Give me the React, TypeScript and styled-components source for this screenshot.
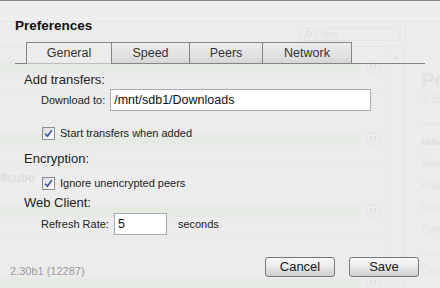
import styled, { createGlobalStyle } from 'styled-components'

const Global = createGlobalStyle`
  html, body {
    margin: 0;
    padding: 0;
    background: #ececec;
  }
  body {
    font-family: "Liberation Sans", Arial, sans-serif;
    color: #222;
  }
`

const Screen = styled.div`
  position: relative;
  width: 440px;
  height: 288px;
  box-sizing: border-box;
  border-top: 1px solid #8a8a8a;
  background: #ececec;
  overflow: hidden;
`

// faded main window behind the dialog
const Backdrop = styled.div`
  display: flex;
  flex-direction: column;
  height: 100%;
  color: #e0e0e0;
`

const TopBar = styled.div`
  height: 20px;
  flex: none;
  background: #eeeeee;
  border-bottom: 1px solid #e6e6e6;
`

const Body = styled.div`
  flex: 1;
  display: flex;
  min-height: 0;
`

const Main = styled.div`
  width: 405px;
  flex: none;
  display: flex;
  flex-direction: column;
`

const FilterBar = styled.div`
  height: 24px;
  flex: none;
  display: flex;
  align-items: center;
  justify-content: flex-end;
  padding-right: 5px;
  border-bottom: 1px solid #e6e6e6;
`

const FilterBox = styled.div`
  width: 96px;
  height: 11px;
  border: 1px solid #e4e4e4;
  border-radius: 2px;
  display: flex;
  align-items: center;
  gap: 3px;
  padding-left: 3px;
  font-size: 11px;
  color: #e3e3e3;
`

const ListArea = styled.div`
  flex: 1;
  display: flex;
  min-height: 0;
`

const Rows = styled.div`
  flex: 1;
  overflow: hidden;
`

const Row = styled.div<{ $offset?: number }>`
  height: 72px;
  box-sizing: border-box;
  margin-top: ${(p) => p.$offset || 0}px;
  border-bottom: 1px solid #e6e6e6;
  margin-right: 2px;
  display: flex;
  flex-direction: column;
`

const Name = styled.div`
  height: 14px;
  margin-top: 5px;
  font-size: 12px;
  font-weight: bold;
  line-height: 14px;
  color: #dedede;
`

const BarLine = styled.div`
  margin-top: 19px;
  display: flex;
  align-items: center;
`

const Bar = styled.div`
  width: 360px;
  height: 11px;
  background: #e3ebe2;
`

const PauseIcon = styled.div`
  width: 12px;
  height: 12px;
  margin-left: 6px;
  border: 1px solid #e2e2e2;
  border-radius: 50%;
  display: flex;
  align-items: center;
  justify-content: center;
  gap: 2px;
  &::before,
  &::after {
    content: '';
    width: 2px;
    height: 6px;
    background: #e2e2e2;
  }
`

const ScrollTrack = styled.div`
  width: 13px;
  flex: none;
  margin: 0 1px 0 0;
  border: 1px solid #e7e7e7;
  border-top: none;
  display: flex;
  justify-content: center;
  padding-top: 6px;
  font-size: 8px;
  color: #e2e2e2;
`

const Inspector = styled.div`
  flex: 1;
  border-left: 1px solid #e5e5e5;
  padding: 46px 0 0 15px;
  display: flex;
  flex-direction: column;
  white-space: nowrap;
  overflow: hidden;
`

const InspTitle = styled.div`
  font-size: 20px;
  font-weight: bold;
  line-height: 24px;
  color: #e1e1e1;
`

const InspSub = styled.div`
  font-size: 12px;
  line-height: 14px;
  color: #e4e4e4;
`

const InspRule = styled.div<{ $gap: number }>`
  margin-top: ${(p) => p.$gap}px;
  border-top: 1px solid #e3e3e3;
`

const InspHead = styled.div`
  margin-top: 10px;
  font-family: "Liberation Serif", serif;
  font-weight: bold;
  font-size: 11px;
  line-height: 14px;
  color: #dfdfdf;
`

const InspItem = styled.div`
  margin-top: 8px;
  font-size: 11px;
  line-height: 14px;
  color: #e3e3e3;
`

// the dialog itself
const Dialog = styled.div`
  position: absolute;
  inset: 0;
  display: flex;
  flex-direction: column;
  padding: 16px 15px 11px 15px;
`

const Title = styled.div`
  font-size: 13.5px;
  font-weight: bold;
  line-height: 17px;
  color: #111;
`

const TabBar = styled.div`
  margin-top: 8px;
  display: flex;
  padding-left: 11px;
  border-bottom: 1px solid #858585;
`

const Tab = styled.div<{ $w: number; $active?: boolean }>`
  width: ${(p) => p.$w}px;
  height: 21px;
  box-sizing: border-box;
  margin-left: -1px;
  &:first-child {
    margin-left: 0;
  }
  border: 1px solid #858585;
  border-bottom: none;
  text-align: center;
  font-size: 12.5px;
  line-height: 20px;
  color: #333;
  background: ${(p) =>
    p.$active
      ? 'rgba(236, 236, 236, 0.55)'
      : 'linear-gradient(to bottom, #ececec 0%, #e2e2e2 60%, #d5d5d5 100%)'};
  ${(p) => (p.$active ? 'height: 22px; margin-bottom: -1px;' : '')}
`

const Section = styled.div`
  padding-left: 9px;
  display: flex;
  flex-direction: column;
`

const Heading = styled.div<{ $top: number }>`
  margin-top: ${(p) => p.$top}px;
  font-size: 13px;
  line-height: 16px;
  color: #222;
`

const Field = styled.div<{ $top: number }>`
  margin-top: ${(p) => p.$top}px;
  padding-left: 17px;
  display: flex;
  align-items: center;
  font-size: 11px;
`

const FieldLabel = styled.span`
  margin-right: 5px;
  color: #222;
`

const Input = styled.div<{ $w: number }>`
  width: ${(p) => p.$w}px;
  height: 22px;
  box-sizing: border-box;
  border: 1px solid #a9acb2;
  background: #fff;
  padding-left: 3px;
  font-size: 12.5px;
  line-height: 20px;
  color: #111;
`

const Unit = styled.span`
  margin-left: 11px;
  color: #222;
`

const CheckRow = styled.label<{ $top: number }>`
  margin-top: ${(p) => p.$top}px;
  padding-left: 18px;
  display: flex;
  align-items: center;
  gap: 5px;
  font-size: 11px;
  line-height: 13px;
  color: #222;
`

const Box = styled.span`
  width: 13px;
  height: 13px;
  box-sizing: border-box;
  border: 1px solid #8d8f93;
  background: linear-gradient(135deg, #d8d9dc 0%, #f2f2f3 60%, #ffffff 100%);
  display: flex;
  align-items: center;
  justify-content: center;
`

const Footer = styled.div`
  margin-top: auto;
  display: flex;
  align-items: flex-end;
  padding: 0 6px 0 0;
  margin-left: -5px;
`

const Version = styled.div`
  margin-right: auto;
  font-size: 11px;
  line-height: 13px;
  color: #9a9a9a;
  margin-bottom: -1px;
`

const Button = styled.button`
  width: 70px;
  height: 20px;
  margin-left: 14px;
  padding: 0;
  border: 1px solid #767676;
  border-radius: 3px;
  background: linear-gradient(to bottom, #f7f7f7 0%, #ececec 45%, #dcdcdc 75%, #cfcfcf 100%);
  font-family: "Liberation Sans", Arial, sans-serif;
  font-size: 13px;
  line-height: 18px;
  color: #1a1a1a;
`

const Check = () => (
  <Box>
    <svg width="9" height="9" viewBox="0 0 9 9">
      <path d="M1.3 4.6 L3.5 7.2 L7.8 1.2" fill="none" stroke="#3f58a6" strokeWidth="1.7" />
    </svg>
  </Box>
)

const SearchGlyph = () => (
  <svg width="9" height="9" viewBox="0 0 9 9">
    <circle cx="5.5" cy="3.5" r="2.6" fill="none" stroke="#dedede" strokeWidth="1.2" />
    <path d="M3.6 5.4 L1 8" stroke="#dedede" strokeWidth="1.4" />
  </svg>
)

const rows = ['', '', '8cube', '']

const App = () => {
  return (
    <>
      <Global />
      <Screen>
        <Backdrop>
          <TopBar />
          <Body>
            <Main>
              <FilterBar>
                <FilterBox>
                  <SearchGlyph />
                  Filter
                </FilterBox>
              </FilterBar>
              <ListArea>
                <Rows>
                  {rows.map((name, i) => (
                    <Row key={i} $offset={i === 0 ? -25 : 0}>
                      <Name>{name}</Name>
                      <BarLine>
                        <Bar />
                        <PauseIcon />
                      </BarLine>
                    </Row>
                  ))}
                </Rows>
                <ScrollTrack>▲</ScrollTrack>
              </ListArea>
            </Main>
            <Inspector>
              <InspTitle>Po</InspTitle>
              <InspSub>3.59</InspSub>
              <InspRule $gap={17} />
              <InspHead>Info</InspHead>
              <InspItem>Piec</InspItem>
              <InspItem>Hash</InspItem>
              <InspItem>Secu</InspItem>
              <InspItem>Com</InspItem>
              <InspRule $gap={18} />
              <InspItem>Cre</InspItem>
              <InspItem>Cre</InspItem>
            </Inspector>
          </Body>
        </Backdrop>

        <Dialog>
          <Title>Preferences</Title>
          <TabBar>
            <Tab $w={86} $active>General</Tab>
            <Tab $w={79}>Speed</Tab>
            <Tab $w={74}>Peers</Tab>
            <Tab $w={90}>Network</Tab>
          </TabBar>
          <Section>
            <Heading $top={8}>Add transfers:</Heading>
            <Field $top={1}>
              <FieldLabel>Download to:</FieldLabel>
              <Input $w={261}>/mnt/sdb1/Downloads</Input>
            </Field>
            <CheckRow $top={16}>
              <Check />
              Start transfers when added
            </CheckRow>
            <Heading $top={11}>Encryption:</Heading>
            <CheckRow $top={10}>
              <Check />
              Ignore unencrypted peers
            </CheckRow>
            <Heading $top={5}>Web Client:</Heading>
            <Field $top={2}>
              <FieldLabel>Refresh Rate:</FieldLabel>
              <Input $w={53}>5</Input>
              <Unit>seconds</Unit>
            </Field>
          </Section>
          <Footer>
            <Version>2.30b1 (12287)</Version>
            <Button>Cancel</Button>
            <Button>Save</Button>
          </Footer>
        </Dialog>
      </Screen>
    </>
  )
}

export default App
